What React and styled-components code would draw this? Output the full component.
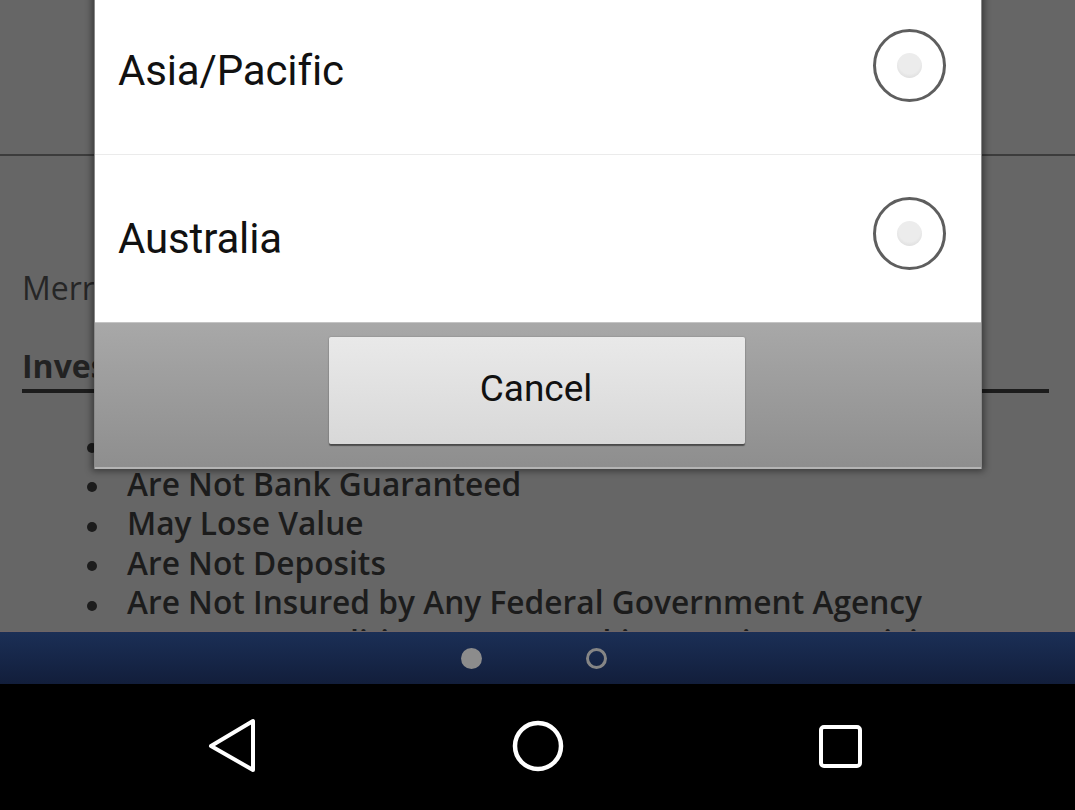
import React from "react";
import styled, { createGlobalStyle } from "styled-components";

const GlobalStyle = createGlobalStyle`
  html, body {
    margin: 0;
    padding: 0;
    background: #000;
  }
  * {
    box-sizing: border-box;
  }
`;

const Screen = styled.div`
  width: 1075px;
  height: 810px;
  display: flex;
  flex-direction: column;
  overflow: hidden;
`;

// page behind the dialog, dimmed
const Content = styled.div`
  position: relative;
  height: 631px;
  flex: none;
  background: #666666;
  overflow: hidden;
`;

const PageHeader = styled.div`
  height: 156px;
  border-bottom: 2px solid #3c3c3c;
`;

const PageBody = styled.div`
  padding: 0 26px 0 22px;
  font-family: "Open Sans", "Liberation Sans", sans-serif;
  color: #222;
`;

const Intro = styled.p`
  margin: 112px 0 0;
  font-size: 32px;
  line-height: 40px;
  color: #262626;
`;

const Heading = styled.h2`
  margin: 38px 0 0;
  padding-bottom: 3px;
  font-size: 32px;
  line-height: 40px;
  font-weight: 700;
  border-bottom: 4px solid #1c1c1c;
`;

const List = styled.ul`
  margin: 31px 0 0;
  padding: 0;
  list-style: none;
`;

const Item = styled.li`
  display: flex;
  align-items: center;
  gap: 30px;
  font-size: 31.7px;
  font-weight: 600;
  line-height: 39.5px;
  white-space: nowrap;
  color: #1c1c1c;

  &::before {
    content: "";
    flex: none;
    width: 10px;
    height: 10px;
    margin: 8px 0 0 65px;
    border-radius: 50%;
    background: #1c1c1c;
  }
`;

// dialog overlay
const Dialog = styled.div`
  position: absolute;
  left: 94px;
  top: -14px;
  width: 888px;
  display: flex;
  flex-direction: column;
  border-left: 1px solid #8a8a8a;
  border-right: 1px solid #8a8a8a;
  box-shadow: 0 0 7px 2px rgba(0, 0, 0, 0.45);
  font-family: Roboto, "Noto Sans", sans-serif;
`;

const Option = styled.div`
  height: ${(p) => p.$h}px;
  display: flex;
  align-items: center;
  justify-content: space-between;
  padding: 0 35px 0 23px;
  background: #fff;
  border-top: ${(p) => (p.$divider ? "1px solid #ebebeb" : "none")};
`;

const OptionLabel = styled.span`
  font-size: 42px;
  color: #111;
  letter-spacing: -0.15px;
`;

const Radio = styled.span`
  width: 73px;
  height: 73px;
  margin-bottom: 10px;
  border-radius: 50%;
  border: 3px solid #5e5e5e;
  display: flex;
  align-items: center;
  justify-content: center;

  &::after {
    content: "";
    width: 25px;
    height: 25px;
    border-radius: 50%;
    background: radial-gradient(circle at 50% 40%, #ececec 55%, #d2d2d2 100%);
  }
`;

const Footer = styled.div`
  height: 147px;
  padding-top: 14px;
  display: flex;
  justify-content: center;
  align-items: flex-start;
  background: linear-gradient(#a8a8a8, #8e8e8e);
  border-top: 1px solid #c4c4c4;
  border-bottom: 2px solid #b4b4b4;
`;

const CancelButton = styled.button`
  width: 416px;
  height: 107px;
  margin-right: 2px;
  border: none;
  border-radius: 2px;
  background: linear-gradient(#e9e9e9, #d8d8d8);
  box-shadow: 0 2px 1px rgba(0, 0, 0, 0.45), 0 0 2px rgba(0, 0, 0, 0.25);
  font-family: Roboto, "Noto Sans", sans-serif;
  font-size: 37px;
  color: #111;
  padding: 0 2px 4px 0;
`;

// pager strip
const PagerBar = styled.div`
  height: 53px;
  flex: none;
  display: flex;
  align-items: center;
  justify-content: center;
  gap: 104px;
  padding-right: 8px;
  background: linear-gradient(#1b2f56, #121e3b);
  border-top: 1px solid #6e6466;
`;

const Dot = styled.span`
  width: 21px;
  height: 21px;
  border-radius: 50%;
  background: ${(p) => (p.$active ? "#8c8c8c" : "transparent")};
  border: ${(p) => (p.$active ? "none" : "3px solid #858585")};
`;

// android navigation bar
const NavBar = styled.div`
  flex: 1;
  background: #000;
  display: flex;
  align-items: center;
  justify-content: space-between;
  padding: 0 205px 2px 205px;
`;

const NavKey = styled.svg`
  width: 60px;
  height: 60px;
`;

const BackIcon = () => (
  <NavKey viewBox="0 0 60 60">
    <path
      d="M48 5 L48 54 L6 30 Z"
      fill="none"
      stroke="#fff"
      strokeWidth="4"
      strokeLinejoin="round"
    />
  </NavKey>
);

const HomeIcon = () => (
  <NavKey viewBox="0 0 60 60">
    <circle cx="30" cy="30" r="23" fill="none" stroke="#fff" strokeWidth="4.5" />
  </NavKey>
);

const RecentIcon = () => (
  <NavKey viewBox="0 0 60 60">
    <rect
      x="11"
      y="11"
      width="39"
      height="39"
      rx="3"
      fill="none"
      stroke="#fff"
      strokeWidth="4"
    />
  </NavKey>
);

const disclosures = [
  "Are Not FDIC Insured",
  "Are Not Bank Guaranteed",
  "May Lose Value",
  "Are Not Deposits",
  "Are Not Insured by Any Federal Government Agency",
  "Are Not a Condition to Any Banking Service or Activity",
];

const regions = [
  { label: "Asia/Pacific", h: 168 },
  { label: "Australia", h: 168 },
];

export default function App() {
  return (
    <>
      <GlobalStyle />
      <Screen>
        <Content>
          <PageHeader />
          <PageBody>
            <Intro>Merrill Lynch Wealth</Intro>
            <Heading>Investment products:</Heading>
            <List>
              {disclosures.map((d) => (
                <Item key={d}>{d}</Item>
              ))}
            </List>
          </PageBody>

          <Dialog>
            {regions.map((r, i) => (
              <Option key={r.label} $h={r.h} $divider={i > 0}>
                <OptionLabel>{r.label}</OptionLabel>
                <Radio />
              </Option>
            ))}
            <Footer>
              <CancelButton>Cancel</CancelButton>
            </Footer>
          </Dialog>
        </Content>

        <PagerBar>
          <Dot $active />
          <Dot />
        </PagerBar>

        <NavBar>
          <BackIcon />
          <HomeIcon />
          <RecentIcon />
        </NavBar>
      </Screen>
    </>
  );
}
